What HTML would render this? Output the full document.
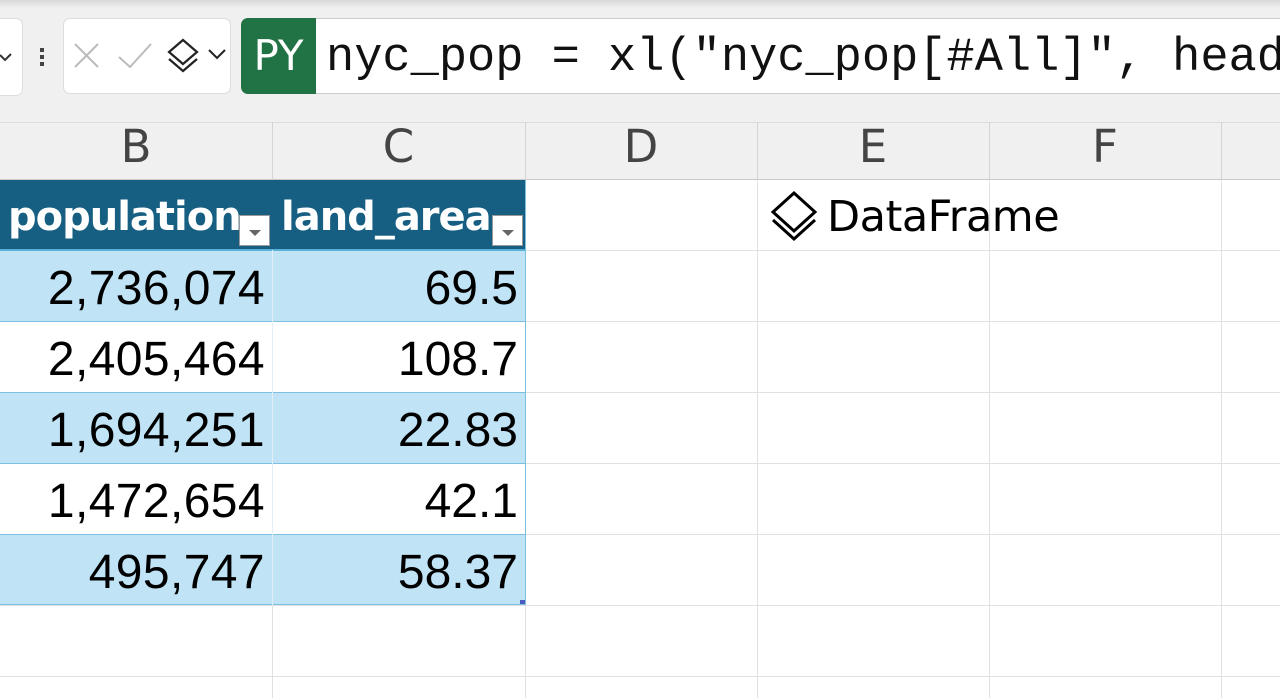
<!DOCTYPE html>
<html><head><style>
html,body{overflow:hidden}
body{margin:0;width:1280px;height:698px;overflow:hidden;background:#fff;font-family:"Liberation Sans","DejaVu Sans",sans-serif;position:relative}
.a{position:absolute}
.hl{position:absolute;height:1px;background:#e1e1e1}
.vl{position:absolute;width:1px;background:#e1e1e1}
.num{position:absolute;font-size:48px;color:#000;text-align:right;line-height:56px}
.col{position:absolute;top:122px;height:58px;line-height:50px;font-size:45px;color:#444;text-align:center;font-family:"DejaVu Sans",sans-serif}
.dd{position:absolute;width:31px;height:31px;background:#fff;border:1px solid #999;box-sizing:border-box}
.dd:after{content:"";position:absolute;left:9px;top:14px;border-left:6px solid transparent;border-right:6px solid transparent;border-top:6px solid #666}
</style></head><body>
<div class="a" style="left:0;top:0;width:1280px;height:180px;background:#f0f0f0"></div>
<div class="a" style="left:0;top:0;width:1280px;height:8px;background:linear-gradient(#d8d8d8,#f0f0f0)"></div>
<div class="a" style="left:-10px;top:18px;width:31px;height:76px;background:#fff;border:1px solid #ddd;border-radius:7px"></div>
<svg class="a" style="left:0;top:50px" width="14" height="16"><path d="M0 5 L5 10 L11 4" stroke="#333" stroke-width="2" fill="none"/></svg>
<div class="a" style="left:40px;top:48px;width:4px;height:4px;background:#444;box-shadow:0 7px #444,0 14px #444"></div>
<div class="a" style="left:63px;top:18px;width:168px;height:76px;background:#fff;border:1px solid #ddd;border-radius:7px;box-sizing:border-box"></div>
<svg class="a" style="left:63px;top:18px" width="168" height="76">
<path d="M12 26 L35 49 M35 26 L12 49" stroke="#bbb" stroke-width="2"/>
<path d="M56 39 L67 49 L88 26" stroke="#bbb" stroke-width="2" fill="none"/>
<path d="M120 22 L134 34 L120 46 L106 34 Z" stroke="#222" stroke-width="2.2" fill="none"/>
<path d="M106 41 L120 53 L134 41" stroke="#222" stroke-width="2.2" fill="none"/>
<path d="M146 32 L154 40 L162 32" stroke="#222" stroke-width="2" fill="none"/>
</svg>
<div class="a" style="left:241px;top:18px;width:1039px;height:76px;overflow:hidden">
<div class="a" style="left:0;top:0;width:1060px;height:76px;background:#fff;border:1px solid #ccc;border-radius:7px;box-sizing:border-box"></div>
<div class="a" style="left:0;top:0;width:75px;height:76px;background:#217346;border-radius:7px 0 0 7px;color:#fff;font-size:42px;line-height:76px;text-align:center;font-family:'DejaVu Sans',sans-serif">PY</div>
<div class="a" style="left:85px;top:0;line-height:82px;font-size:47px;font-family:'Liberation Mono',monospace;color:#111;white-space:pre">nyc_pop = xl("nyc_pop[#All]", headers=True)</div>
</div>
<div class="a" style="left:0;top:122px;width:1280px;height:1px;background:#ddd"></div>
<div class="a" style="left:0;top:179px;width:1280px;height:1px;background:#c8c8c8"></div>
<div class="col" style="left:0;width:272px">B</div>
<div class="col" style="left:272px;width:253px">C</div>
<div class="col" style="left:525px;width:232px">D</div>
<div class="col" style="left:757px;width:232px">E</div>
<div class="col" style="left:989px;width:232px">F</div>
<div class="vl" style="left:272px;top:122px;height:58px;background:#d4d4d4"></div>
<div class="vl" style="left:525px;top:122px;height:58px;background:#d4d4d4"></div>
<div class="vl" style="left:757px;top:122px;height:58px;background:#d4d4d4"></div>
<div class="vl" style="left:989px;top:122px;height:58px;background:#d4d4d4"></div>
<div class="vl" style="left:1221px;top:122px;height:58px;background:#d4d4d4"></div>
<div class="vl" style="left:272px;top:180px;height:518px"></div>
<div class="vl" style="left:525px;top:180px;height:518px"></div>
<div class="vl" style="left:757px;top:180px;height:518px"></div>
<div class="vl" style="left:989px;top:180px;height:518px"></div>
<div class="vl" style="left:1221px;top:180px;height:518px"></div>
<div class="hl" style="left:0;top:250px;width:1280px"></div>
<div class="hl" style="left:0;top:321px;width:1280px"></div>
<div class="hl" style="left:0;top:392px;width:1280px"></div>
<div class="hl" style="left:0;top:463px;width:1280px"></div>
<div class="hl" style="left:0;top:534px;width:1280px"></div>
<div class="hl" style="left:0;top:605px;width:1280px"></div>
<div class="hl" style="left:0;top:676px;width:1280px"></div>
<div class="a" style="left:0;top:180px;width:526px;height:70px;background:#175f82"></div>
<div class="a" style="left:0;top:250px;width:526px;height:71px;background:#c0e4f5"></div>
<div class="a" style="left:0;top:321px;width:526px;height:71px;background:#fff"></div>
<div class="a" style="left:0;top:392px;width:526px;height:71px;background:#c0e4f5"></div>
<div class="a" style="left:0;top:463px;width:526px;height:71px;background:#fff"></div>
<div class="a" style="left:0;top:534px;width:526px;height:71px;background:#c0e4f5"></div>
<div class="a" style="left:0;top:249px;width:526px;height:2px;background:#5ab0d8"></div>
<div class="a" style="left:0;top:321px;width:526px;height:1px;background:#7cc0e0"></div>
<div class="a" style="left:0;top:392px;width:526px;height:1px;background:#7cc0e0"></div>
<div class="a" style="left:0;top:463px;width:526px;height:1px;background:#7cc0e0"></div>
<div class="a" style="left:0;top:534px;width:526px;height:1px;background:#7cc0e0"></div>
<div class="a" style="left:0;top:604px;width:526px;height:1px;background:#7cc0e0"></div>
<div class="a" style="left:525px;top:180px;width:1px;height:425px;background:#7cc0e0"></div>
<div class="a" style="left:272px;top:250px;width:1px;height:355px;background:#e0eef5"></div>
<div class="a" style="left:520px;top:600px;width:5px;height:4px;background:#4a5cc0"></div>
<div class="a" style="left:8px;top:194px;font-size:40px;font-weight:bold;color:#fff;font-family:'DejaVu Sans',sans-serif;letter-spacing:-1px">population</div>
<div class="a" style="left:281px;top:194px;font-size:40px;font-weight:bold;color:#fff;font-family:'DejaVu Sans',sans-serif;letter-spacing:-1px">land_area</div>
<div class="dd" style="left:239px;top:215px"></div>
<div class="dd" style="left:492px;top:215px"></div>
<div class="num" style="right:1015px;top:261px;letter-spacing:0.4px">2,736,074</div>
<div class="num" style="right:1015px;top:332px;letter-spacing:0.4px">2,405,464</div>
<div class="num" style="right:1015px;top:403px;letter-spacing:0.4px">1,694,251</div>
<div class="num" style="right:1015px;top:474px;letter-spacing:0.4px">1,472,654</div>
<div class="num" style="right:1015px;top:545px;letter-spacing:0.4px">495,747</div>
<div class="num" style="right:762px;top:261px">69.5</div>
<div class="num" style="right:762px;top:332px">108.7</div>
<div class="num" style="right:762px;top:403px">22.83</div>
<div class="num" style="right:762px;top:474px">42.1</div>
<div class="num" style="right:762px;top:545px">58.37</div>
<svg class="a" style="left:768px;top:190px" width="56" height="56"><path d="M26 3 L47 22 L26 41 L5 22 Z" stroke="#000" stroke-width="3" fill="none"/><path d="M5 30 L26 49 L47 30" stroke="#000" stroke-width="3" fill="none"/></svg>
<div class="a" style="left:827px;top:192px;font-size:43px;color:#000;font-family:'DejaVu Sans',sans-serif;letter-spacing:-0.5px">DataFrame</div>
</body></html>
